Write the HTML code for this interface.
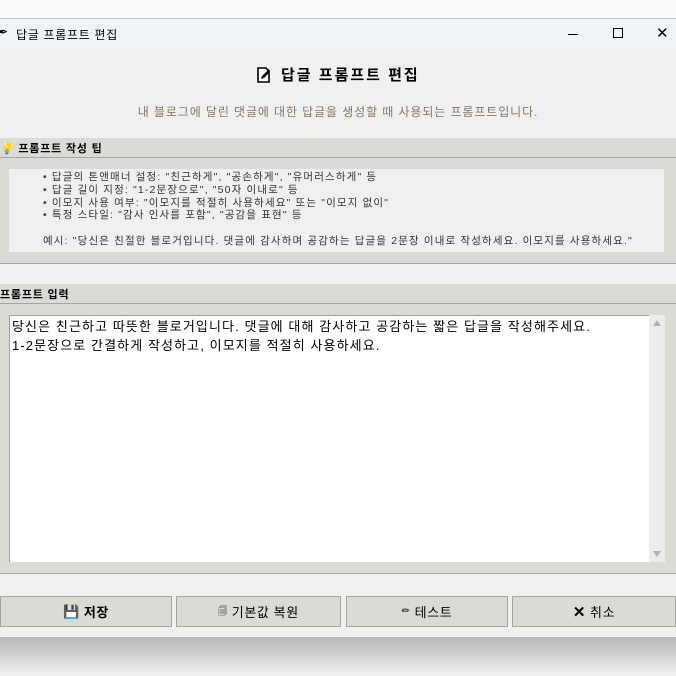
<!DOCTYPE html>
<html><head><meta charset="utf-8"><style>
*{margin:0;padding:0;box-sizing:border-box}
body{width:676px;height:676px;overflow:hidden;background:linear-gradient(#fafafa,#ececec);font-family:"Liberation Sans","Noto Sans CJK KR",sans-serif;position:relative}
.abs{position:absolute}
.win{left:0;top:18px;width:676px;height:620px;background:#f0f0f0;border-top:1px solid #bdbdbd;border-bottom:1px solid #b8b8b8}
.shadow{left:0;top:638px;width:676px;height:38px;background:linear-gradient(#b8b8b8,#f2f2f2)}
.title{left:0;top:0;width:676px;height:30px;background:#eff4f9;font-size:12px;color:#000}
.band{background:#dcdad5}
.btn{top:577px;height:31px;background:#dcdad5;border:1px solid #a8a6a0;font-size:13px;display:flex;align-items:center;justify-content:center;gap:4px;letter-spacing:0.6px}
</style></head><body>
<div class="abs win">
 <div class="abs title">
  <span class="abs" style="left:-2px;top:6px;font-size:12px">✒</span>
  <span class="abs" style="left:16px;top:7px;letter-spacing:0.7px">답글 프롬프트 편집</span>
  <div class="abs" style="left:568px;top:15px;width:10px;height:1px;background:#000"></div>
  <div class="abs" style="left:613px;top:9px;width:10px;height:10px;border:1px solid #000"></div>
  <span class="abs" style="left:656px;top:5px;font-size:15px;font-weight:300">✕</span>
 </div>
 <div class="abs" style="left:257px;top:45px;font-size:15px;font-weight:bold;display:flex;align-items:center;gap:10px;letter-spacing:2px">
  <svg width="14" height="16" viewBox="0 0 14 16"><path d="M1 1h8l3 3v11H1z" fill="#fff" stroke="#000" stroke-width="1.6"/><path d="M4 12l1-3 6-6 2 2-6 6z" fill="#000"/></svg>
  <span>답글 프롬프트 편집</span></div>
 <div class="abs" style="left:0;width:676px;top:84px;text-align:center;font-size:12px;color:#8a7560;letter-spacing:0.9px">내 블로그에 달린 댓글에 대한 답글을 생성할 때 사용되는 프롬프트입니다.</div>
 <div class="abs band" style="left:0;top:119px;width:676px;height:126px;border-bottom:1px solid #a8a6a0">
  <div class="abs" style="left:0;top:19px;width:676px;height:1px;background:#a8a6a0"></div>
  <span class="abs" style="left:0;top:2px;font-size:11px;font-weight:bold;letter-spacing:0.8px">💡 프롬프트 작성 팁</span>
  <div class="abs" style="left:9px;top:31px;width:655px;height:83px;background:#f0f0f0;font-size:10.5px;color:#333;line-height:12.8px;padding:2px 0 0 34px;letter-spacing:1.15px;white-space:nowrap">
   • 답글의 톤앤매너 설정: "친근하게", "공손하게", "유머러스하게" 등<br>
   • 답글 길이 지정: "1-2문장으로", "50자 이내로" 등<br>
   • 이모지 사용 여부: "이모지를 적절히 사용하세요" 또는 "이모지 없이"<br>
   • 특정 스타일: "감사 인사를 포함", "공감을 표현" 등<br><br>
   예시: "당신은 친절한 블로거입니다. 댓글에 감사하며 공감하는 답글을 2문장 이내로 작성하세요. 이모지를 사용하세요."
  </div>
 </div>
 <div class="abs band" style="left:0;top:265px;width:676px;height:290px;border-bottom:1px solid #a8a6a0">
  <div class="abs" style="left:0;top:19px;width:676px;height:1px;background:#a8a6a0"></div>
  <span class="abs" style="left:0;top:2px;font-size:11px;font-weight:bold;letter-spacing:0.8px">프롬프트 입력</span>
  <div class="abs" style="left:9px;top:31px;width:640px;height:247px;background:#fff;border-top:1px solid #a0a0a0;border-left:1px solid #a0a0a0;font-size:13px;line-height:19px;padding:1px 2px;letter-spacing:1.1px;white-space:nowrap">당신은 친근하고 따뜻한 블로거입니다. 댓글에 대해 감사하고 공감하는 짧은 답글을 작성해주세요.<br>1-2문장으로 간결하게 작성하고, 이모지를 적절히 사용하세요.</div>
  <div class="abs" style="left:649px;top:31px;width:16px;height:247px;background:#ececec">
   <div class="abs" style="left:4px;top:5px;border:4px solid transparent;border-bottom:6px solid #b0b0b0;border-top:0"></div>
   <div class="abs" style="left:4px;top:236px;border:4px solid transparent;border-top:6px solid #b0b0b0;border-bottom:0"></div>
  </div>
 </div>
 <div class="abs btn" style="left:0;width:172px;font-weight:bold"><span>💾</span>저장</div>
 <div class="abs btn" style="left:176px;width:165px"><span style="font-size:9px">🗐</span>기본값 복원</div>
 <div class="abs btn" style="left:346px;width:162px"><span style="font-size:10px">✏</span>테스트</div>
 <div class="abs btn" style="left:512px;width:164px"><b style="font-size:15px">✕</b>취소</div>
</div>
<div class="abs shadow"></div>
</body></html>
